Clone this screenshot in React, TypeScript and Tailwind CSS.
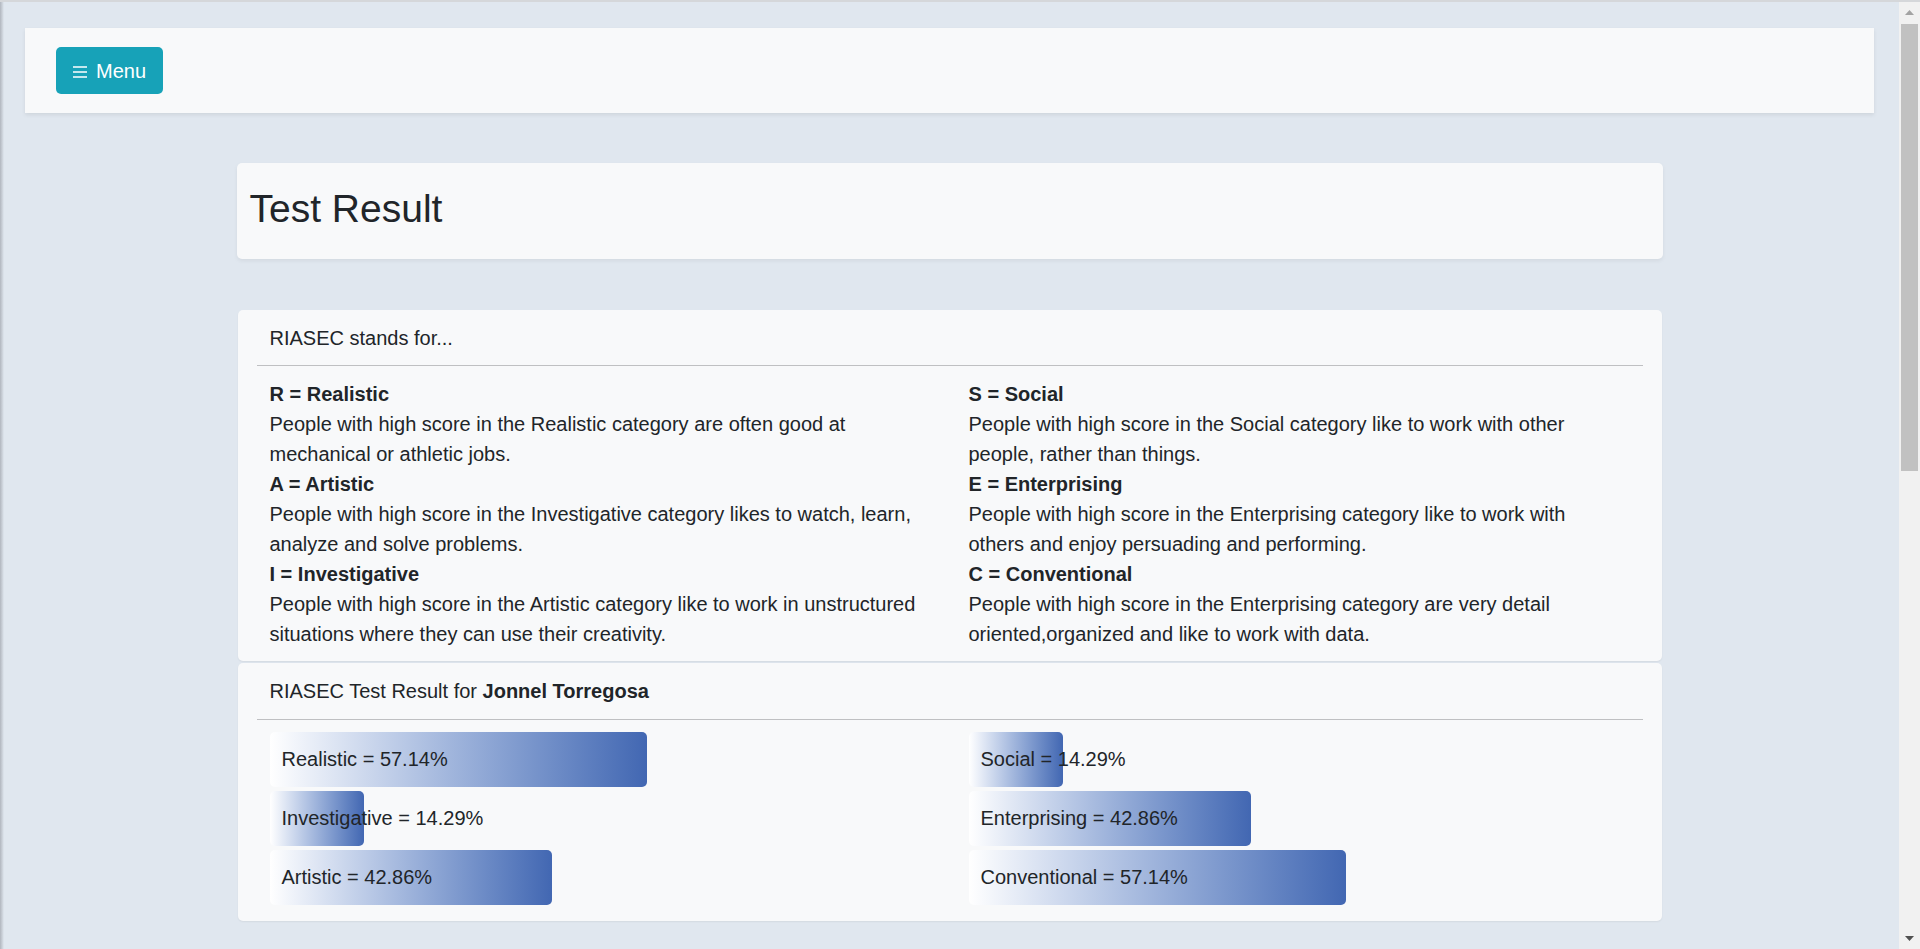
import React from 'react';

interface Category {
    code: string;
    name: string;
    description: string;
}

interface Score {
    name: string;
    percent: number;
}

const leftCategories: Category[] = [
    { code: 'R', name: 'Realistic', description: 'People with high score in the Realistic category are often good at mechanical or athletic jobs.' },
    { code: 'A', name: 'Artistic', description: 'People with high score in the Investigative category likes to watch, learn, analyze and solve problems.' },
    { code: 'I', name: 'Investigative', description: 'People with high score in the Artistic category like to work in unstructured situations where they can use their creativity.' }
];

const rightCategories: Category[] = [
    { code: 'S', name: 'Social', description: 'People with high score in the Social category like to work with other people, rather than things.' },
    { code: 'E', name: 'Enterprising', description: 'People with high score in the Enterprising category like to work with others and enjoy persuading and performing.' },
    { code: 'C', name: 'Conventional', description: 'People with high score in the Enterprising category are very detail oriented,organized and like to work with data.' }
];

const leftScores: Score[] = [
    { name: 'Realistic', percent: 57.14 },
    { name: 'Investigative', percent: 14.29 },
    { name: 'Artistic', percent: 42.86 }
];

const rightScores: Score[] = [
    { name: 'Social', percent: 14.29 },
    { name: 'Enterprising', percent: 42.86 },
    { name: 'Conventional', percent: 57.14 }
];

const CategoryList: React.FC<{ items: Category[] }> = ({ items }) => (
    <div className="w-[652px] shrink-0">
        {items.map((item) => (
            <div key={item.code}>
                <div className="font-bold">{item.code} = {item.name}</div>
                <p>{item.description}</p>
            </div>
        ))}
    </div>
);

const ScoreBars: React.FC<{ items: Score[] }> = ({ items }) => (
    <div className="w-[660px] shrink-0 flex flex-col gap-[4px]">
        {items.map((item) => (
            <div
                key={item.name}
                className="h-[55px] rounded-[5px] bg-gradient-to-r from-[#ffffff] to-[#4267b2] pl-[12px] leading-[55px] whitespace-nowrap"
                style={{ width: `${item.percent}%` }}
            >
                {item.name} = {item.percent.toFixed(2)}%
            </div>
        ))}
    </div>
);

export default function App() {
    return (
        <div className="h-screen w-full overflow-hidden flex flex-col bg-[#e0e7ef] text-[#212529] text-[20px] leading-[30px] font-['Liberation_Sans',Arial,sans-serif]">
            <div className="h-[2px] bg-[#d5d7da]" />
            <div className="flex flex-1 min-h-0">
                <div className="w-[4px] bg-gradient-to-r from-[#b1b6be] to-[#e0e7ef]" />

                <main className="flex-1 min-w-0 pt-[26px] pl-[21px] pr-[25px]">
                    {/* top navigation */}
                    <nav className="bg-[#f8f9fa] shadow-[0_2px_4px_rgba(0,0,0,0.08)] py-[19px] px-[31px]">
                        <button className="h-[47px] px-[17px] flex items-center gap-[9px] rounded-[5px] bg-[#17a2b8] text-white">
                            <svg width="14" height="12" viewBox="0 0 14 12" className="mt-[2px]">
                                <path d="M0 1h14M0 6h14M0 11h14" stroke="currentColor" strokeWidth="1.5" />
                            </svg>
                            <span>Menu</span>
                        </button>
                    </nav>

                    <div className="w-[1426px] mx-auto mt-[50px]">
                        <div className="h-[96px] flex items-center px-[13px] pb-[4px] bg-[#f8f9fa] rounded-[5px] shadow-[0_2px_4px_rgba(0,0,0,0.06)]">
                            <h2 className="text-[39px] leading-[46px]">Test Result</h2>
                        </div>

                        {/* legend */}
                        <section className="mt-[51px] mx-[1px] bg-[#f8f9fa] rounded-[5px] px-[19px] pt-[13px] pb-[12px] shadow-[0_1px_2px_rgba(0,0,0,0.06)]">
                            <div className="pl-[13px]">RIASEC stands for...</div>
                            <div className="h-[1px] bg-[#bfc0c2] mt-[12px] mb-[13px]" />
                            <div className="flex gap-[47px] pl-[13px]">
                                <CategoryList items={leftCategories} />
                                <CategoryList items={rightCategories} />
                            </div>
                        </section>

                        {/* results */}
                        <section className="mt-[2px] mx-[1px] bg-[#f8f9fa] rounded-[5px] px-[19px] pt-[13px] pb-[16px] shadow-[0_1px_2px_rgba(0,0,0,0.06)]">
                            <div className="pl-[13px]">
                                RIASEC Test Result for <span className="font-bold">Jonnel Torregosa</span>
                            </div>
                            <div className="h-[1px] bg-[#bfc0c2] mt-[13px] mb-[12px]" />
                            <div className="flex gap-[39px] pl-[13px]">
                                <ScoreBars items={leftScores} />
                                <ScoreBars items={rightScores} />
                            </div>
                        </section>
                    </div>
                </main>

                {/* scrollbar */}
                <div className="w-[21px] bg-[#f1f1f1] flex flex-col">
                    <div className="h-[21px] flex items-center justify-center">
                        <svg width="9" height="5" viewBox="0 0 9 5">
                            <polygon points="4.5,0 9,5 0,5" fill="#a3a3a3" />
                        </svg>
                    </div>
                    <div className="mx-[2px] mt-[1px] h-[447px] bg-[#c1c1c1]" />
                    <div className="flex-1" />
                    <div className="h-[21px] flex items-center justify-center">
                        <svg width="9" height="5" viewBox="0 0 9 5">
                            <polygon points="0,0 9,0 4.5,5" fill="#505050" />
                        </svg>
                    </div>
                </div>
            </div>
        </div>
    );
}
